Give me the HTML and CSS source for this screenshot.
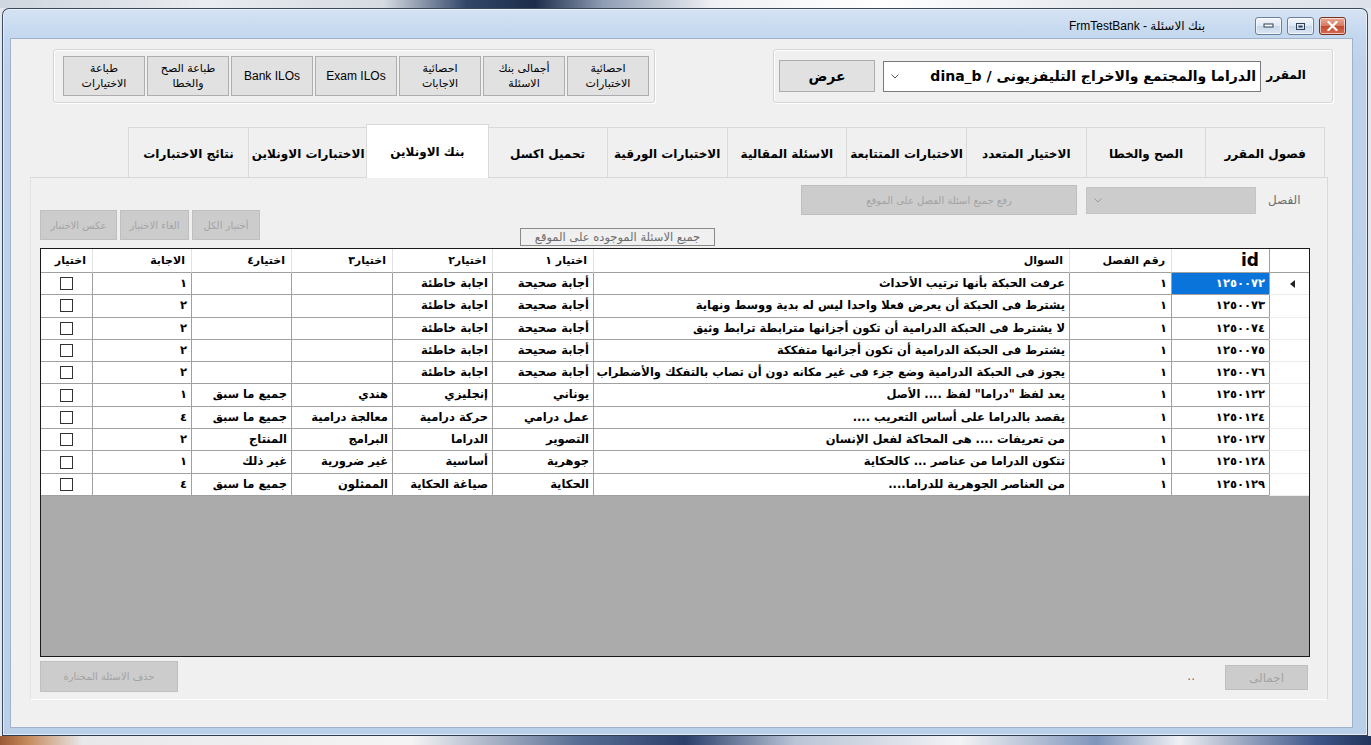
FILE: index.html
```html
<!DOCTYPE html>
<html lang="ar">
<head>
<meta charset="utf-8">
<title>FrmTestBank</title>
<link rel="stylesheet" href="styles.css">
</head>
<body>
<div class="desktop">
  <div class="window">
    <div class="titlebar">
      <span class="title" dir="ltr">FrmTestBank - بنك الاسئلة</span>
      <div class="cbtns">
        <span class="cbtn"><svg width="11" height="6" viewBox="0 0 11 6"><rect x="1" y="1" width="9" height="3" fill="#fff" stroke="#2f3f56" stroke-width="1"/></svg></span>
        <span class="cbtn"><svg width="11" height="9" viewBox="0 0 11 9"><rect x="1.5" y="1.5" width="8" height="6" fill="none" stroke="#2f3f56" stroke-width="1"/><rect x="3.5" y="3.5" width="4" height="2" fill="#2f3f56"/></svg></span>
        <span class="cbtn close"><svg width="11" height="10" viewBox="0 0 11 10"><path d="M1.5 1 L9.5 9 M9.5 1 L1.5 9" stroke="#fff" stroke-width="2.2" stroke-linecap="square"/></svg></span>
      </div>
    </div>
    <div class="client" dir="rtl">
      <div class="top-row">
        <div class="grp grp-course">
          <span class="lbl-course">المقرر</span>
          <div class="combo">
            <span class="combo-text">الدراما والمجتمع والاخراج التليفزيونى / dina_b</span>
            <svg class="combo-arrow" width="8" height="5" viewBox="0 0 8 5"><path d="M0.5 0.5 L4 4 L7.5 0.5" fill="none" stroke="#555" stroke-width="1"/></svg>
          </div>
          <button class="btn btn-show">عرض</button>
        </div>
        <div class="grp grp-tools">
          <button class="btn tbtn">احصائية<br>الاختبارات</button>
          <button class="btn tbtn">أجمالى بنك<br>الاسئلة</button>
          <button class="btn tbtn">احصائية<br>الاجابات</button>
          <button class="btn tbtn latin">Exam ILOs</button>
          <button class="btn tbtn latin">Bank ILOs</button>
          <button class="btn tbtn">طباعة الصح<br>والخطا</button>
          <button class="btn tbtn">طباعة<br>الاختيارات</button>
        </div>
      </div>

      <div class="tabs">
        <div class="tab">فصول المقرر</div>
        <div class="tab">الصح والخطا</div>
        <div class="tab">الاختيار المتعدد</div>
        <div class="tab">الاختبارات المتتابعة</div>
        <div class="tab">الاسئلة المقالية</div>
        <div class="tab">الاختبارات الورقية</div>
        <div class="tab">تحميل اكسل</div>
        <div class="tab active">بنك الاونلاين</div>
        <div class="tab">الاختبارات الاونلاين</div>
        <div class="tab">نتائج الاختبارات</div>
      </div>

      <div class="panel" dir="ltr">
        <div class="toolbar">
          <div class="selbtns">
            <button class="btn dis b-inv">عكس الاختبار</button>
            <button class="btn dis b-clr">الغاء الاختيار</button>
            <button class="btn dis b-all">أختيار الكل</button>
          </div>
          <div class="boxlabel" dir="rtl">جميع الاسئلة الموجوده على الموقع</div>
          <button class="btn dis b-up" dir="rtl">رفع جميع اسئلة الفصل على الموقع</button>
          <div class="combo dis-combo" dir="rtl">
            <span class="combo-text"></span>
            <svg class="combo-arrow" width="8" height="5" viewBox="0 0 8 5"><path d="M0.5 0.5 L4 4 L7.5 0.5" fill="none" stroke="#9a9a9a" stroke-width="1"/></svg>
          </div>
          <span class="lbl-ch" dir="rtl">الفصل</span>
        </div>

        <div class="grid" dir="rtl">
          <div class="row hrow">
            <div class="c rh"></div>
            <div class="c h-id">id</div>
            <div class="c">رقم الفصل</div>
            <div class="c">السوال</div>
            <div class="c">اختيار ١</div>
            <div class="c">اختيار٢</div>
            <div class="c">اختيار٣</div>
            <div class="c">اختيار٤</div>
            <div class="c">الاجابة</div>
            <div class="c">اختيار</div>
          </div>

          <div class="row">
            <div class="c rh"><span class="arrow"></span></div>
            <div class="c sel">١٢٥٠٠٧٢</div>
            <div class="c">١</div>
            <div class="c">عرفت الحبكة بأنها ترتيب الأحداث</div>
            <div class="c">أجابة صحيحة</div>
            <div class="c">اجابة خاطئة</div>
            <div class="c"></div>
            <div class="c"></div>
            <div class="c">١</div>
            <div class="c ck"><span class="chk"></span></div>
          </div>
          <div class="row">
            <div class="c rh"></div>
            <div class="c">١٢٥٠٠٧٣</div>
            <div class="c">١</div>
            <div class="c">يشترط فى الحبكة أن يعرض فعلا واحدا ليس له بدية ووسط ونهاية</div>
            <div class="c">أجابة صحيحة</div>
            <div class="c">اجابة خاطئة</div>
            <div class="c"></div>
            <div class="c"></div>
            <div class="c">٢</div>
            <div class="c ck"><span class="chk"></span></div>
          </div>
          <div class="row">
            <div class="c rh"></div>
            <div class="c">١٢٥٠٠٧٤</div>
            <div class="c">١</div>
            <div class="c">لا يشترط فى الحبكة الدرامية أن تكون أجزانها مترابطة ترابط وثيق</div>
            <div class="c">أجابة صحيحة</div>
            <div class="c">اجابة خاطئة</div>
            <div class="c"></div>
            <div class="c"></div>
            <div class="c">٢</div>
            <div class="c ck"><span class="chk"></span></div>
          </div>
          <div class="row">
            <div class="c rh"></div>
            <div class="c">١٢٥٠٠٧٥</div>
            <div class="c">١</div>
            <div class="c">يشترط فى الحبكة الدرامية أن تكون أجزانها متفككة</div>
            <div class="c">أجابة صحيحة</div>
            <div class="c">اجابة خاطئة</div>
            <div class="c"></div>
            <div class="c"></div>
            <div class="c">٢</div>
            <div class="c ck"><span class="chk"></span></div>
          </div>
          <div class="row">
            <div class="c rh"></div>
            <div class="c">١٢٥٠٠٧٦</div>
            <div class="c">١</div>
            <div class="c">يجوز فى الحبكة الدرامية وضع جزء فى غير مكانه دون أن تصاب بالتفكك والأضطراب</div>
            <div class="c">أجابة صحيحة</div>
            <div class="c">اجابة خاطئة</div>
            <div class="c"></div>
            <div class="c"></div>
            <div class="c">٢</div>
            <div class="c ck"><span class="chk"></span></div>
          </div>
          <div class="row">
            <div class="c rh"></div>
            <div class="c">١٢٥٠١٢٢</div>
            <div class="c">١</div>
            <div class="c">يعد لفظ "دراما" لفظ .... الأصل</div>
            <div class="c">يوناني</div>
            <div class="c">إنجليزي</div>
            <div class="c">هندي</div>
            <div class="c">جميع ما سبق</div>
            <div class="c">١</div>
            <div class="c ck"><span class="chk"></span></div>
          </div>
          <div class="row">
            <div class="c rh"></div>
            <div class="c">١٢٥٠١٢٤</div>
            <div class="c">١</div>
            <div class="c">يقصد بالدراما على أساس التعريب ....</div>
            <div class="c">عمل درامي</div>
            <div class="c">حركة درامية</div>
            <div class="c">معالجة درامية</div>
            <div class="c">جميع ما سبق</div>
            <div class="c">٤</div>
            <div class="c ck"><span class="chk"></span></div>
          </div>
          <div class="row">
            <div class="c rh"></div>
            <div class="c">١٢٥٠١٢٧</div>
            <div class="c">١</div>
            <div class="c">من تعريفات .... هى المحاكة لفعل الإنسان</div>
            <div class="c">التصوير</div>
            <div class="c">الدراما</div>
            <div class="c">البرامج</div>
            <div class="c">المنتاج</div>
            <div class="c">٢</div>
            <div class="c ck"><span class="chk"></span></div>
          </div>
          <div class="row">
            <div class="c rh"></div>
            <div class="c">١٢٥٠١٢٨</div>
            <div class="c">١</div>
            <div class="c">تتكون الدراما من عناصر ... كالحكاية</div>
            <div class="c">جوهرية</div>
            <div class="c">أساسية</div>
            <div class="c">غير ضرورية</div>
            <div class="c">غير ذلك</div>
            <div class="c">١</div>
            <div class="c ck"><span class="chk"></span></div>
          </div>
          <div class="row">
            <div class="c rh"></div>
            <div class="c">١٢٥٠١٢٩</div>
            <div class="c">١</div>
            <div class="c">من العناصر الجوهرية للدراما....</div>
            <div class="c">الحكاية</div>
            <div class="c">صياغة الحكاية</div>
            <div class="c">الممثلون</div>
            <div class="c">جميع ما سبق</div>
            <div class="c">٤</div>
            <div class="c ck"><span class="chk"></span></div>
          </div>
        </div>

        <div class="bottom-row">
          <button class="btn dis b-del" dir="rtl">حذف الاسئلة المختارة</button>
          <span class="dots">..</span>
          <button class="btn dis b-total" dir="rtl">اجمالى</button>
        </div>
      </div>
    </div>
  </div>
</div>
</body>
</html>
```

FILE: styles.css
```css
* { box-sizing: border-box; }
html, body { margin: 0; padding: 0; }
body {
  width: 1371px; height: 745px; overflow: hidden;
  font-family: "DejaVu Sans", "Liberation Sans", sans-serif;
  font-size: 12px; color: #000;
}

.desktop {
  width: 1371px; height: 745px;
  padding: 8px 3px 0 2px;
  background:
    linear-gradient(to right, #cfd6df 0, #e9ecf0 15%, #d6dbe2 28%, #33476a 34%, #1c2c4a 39%, #8f9db4 44%, #eef0f3 52%, #ffffff 64%, #e6e9ee 80%, #dde2ea 100%) top / 100% 8px no-repeat,
    linear-gradient(to right, #9a5a35 0, #c58a5c 2%, #e8e8ea 6%, #f4f4f5 30%, #5a6f95 42%, #2b3f6a 50%, #b9c4d6 58%, #f2f3f5 70%, #7f95bb 80%, #eef0f4 86%, #3d5689 96%, #22355c 100%) bottom / 100% 9px no-repeat,
    #e4e7ec;
}

.window {
  width: 1366px; height: 728px;
  border: 1px solid #3a4a62;
  border-bottom-color: #2f3d52;
  border-radius: 7px 7px 0 0;
  background: linear-gradient(to bottom, #d5e3f3 0, #c3d7ee 28px, #bdd2ea 60px, #bad0e9 100%);
  box-shadow: inset 0 0 0 1px rgba(255,255,255,0.55);
  display: flex; flex-direction: column;
}

.titlebar {
  height: 29px; flex: none;
  display: flex; justify-content: flex-end; align-items: flex-start;
  padding-right: 21px;
}
.title {
  margin-top: 10px; margin-right: 50px;
  font-family: "Liberation Sans", "DejaVu Sans", sans-serif; font-size: 12px; color: #000;
}
.cbtns { display: flex; gap: 5px; margin-top: 8px; }
.cbtn {
  width: 27px; height: 18px;
  border: 1px solid #6a7f9c; border-radius: 3px;
  background: linear-gradient(to bottom, #f4f7fb 0, #dfe8f3 48%, #c9d8ea 52%, #dbe6f2 100%);
  box-shadow: inset 0 0 0 1px rgba(255,255,255,0.6);
  display: flex; align-items: center; justify-content: center;
}
.cbtn.close {
  border-color: #7a3020;
  background: linear-gradient(to bottom, #e9a996 0, #d87a62 48%, #c44a2e 52%, #d56b50 100%);
}

.client {
  flex: none;
  margin: 0 14px 0 7px;
  height: 690px;
  background: #f0f0f0;
  border: 1px solid #9fb2c9;
  display: flex; flex-direction: column;
}

/* top row */
.top-row {
  display: flex; align-items: flex-start;
  margin-top: 10px; height: 54px;
}
.grp {
  height: 54px;
  border: 1px solid #d5d5d5; border-radius: 3px;
  box-shadow: inset 1px 1px 0 #fff, 1px 1px 0 #fff;
  display: flex; align-items: center;
}
.grp-course {
  width: 560px; margin-right: 19px;
  padding-right: 26px; padding-left: 5px;
}
.lbl-course {
  width: 28px; flex: none; white-space: nowrap;
  font-weight: bold; font-size: 12px;
  margin-left: 17px; margin-top: -2px;
  display: flex; justify-content: flex-start;
}
.combo {
  width: 378px; height: 31px; flex: none;
  background: #fff; border: 1px solid #7a7a7a;
  display: flex; align-items: center; justify-content: space-between;
  padding: 0 4px 0 7px; margin-left: 8px;
}
.combo-text {
  font-weight: bold; font-size: 14px; white-space: nowrap; overflow: hidden;
}
.combo-arrow { flex: none; }

.btn {
  font-family: "DejaVu Sans", "Liberation Sans", sans-serif;
  background: #e1e1e1; border: 1px solid #adadad; border-radius: 0;
  color: #000; padding: 0; margin: 0;
  display: flex; align-items: center; justify-content: center; text-align: center;
  white-space: nowrap;
}
.btn-show { width: 96px; height: 32px; font-weight: bold; font-size: 14px; flex: none; }

.grp-tools {
  width: 602px; margin-right: 118px;
  padding-right: 5px; padding-left: 9px;
  gap: 2px;
}
.tbtn { width: 82px; height: 40px; font-size: 11px; line-height: 15px; flex: none; }
.tbtn.latin { font-family: "Liberation Sans", sans-serif; font-size: 12px; }

/* tabs */
.tabs {
  display: flex; align-items: flex-end;
  width: 1298px; height: 53px; margin-top: 21px; margin-right: 24px;
  padding-right: 3px; flex: none;
}
.tab {
  width: 119.7px; height: 50px; flex: none;
  background: #f0f0f0;
  border-top: 1px solid #d9d9d9; border-left: 1px solid #d9d9d9;
  display: flex; align-items: center; justify-content: center;
  font-weight: bold; font-size: 12px; white-space: nowrap;
  padding-top: 3px;
}
.tab:first-child { border-right: 1px solid #d9d9d9; }
.tab.active {
  position: relative; z-index: 2;
  width: 123.7px; margin: 0 -2px -1px -2px; height: 54px;
  background: #fff; border: 1px solid #d9d9d9; border-bottom: none;
  padding-top: 0;
}

/* panel */
.panel {
  width: 1298px; height: 523px; margin-right: 24px; flex: none;
  border: 1px solid #d9d9d9; border-bottom-color: #fff; border-left-color: #e3e3e3;
  background: #f0f0f0;
  display: flex; flex-direction: column; align-items: flex-start;
}
.toolbar {
  height: 70px; flex: none; width: 100%;
  display: flex; align-items: flex-start;
  padding-left: 9px;
}
.selbtns { display: flex; gap: 3px; margin-top: 32px; }
.dis {
  background: #cccccc; border-color: #bfbfbf; color: #a3a3a3;
  font-size: 10px;
}
.b-inv { width: 77px; height: 30px; }
.b-clr { width: 69px; height: 30px; }
.b-all { width: 68px; height: 30px; }
.boxlabel {
  width: 195px; height: 18px; margin-left: 260px; margin-top: 50px;
  border: 1px solid #8a8a8a; color: #6d6d6d;
  font-size: 11.5px; line-height: 16px; text-align: center; white-space: nowrap; overflow: hidden;
}
.b-up { width: 276px; height: 30px; margin-left: 86px; margin-top: 7px; font-size: 10px; }
.dis-combo {
  width: 170px; height: 27px; margin-left: 9px; margin-top: 9px;
  background: #cccccc; border-color: #c4c4c4;
}
.lbl-ch { margin-left: 12px; margin-top: 15px; color: #6d6d6d; font-size: 12px; white-space: nowrap; }

/* grid */
.grid {
  width: 1270px; height: 409px; margin-left: 9px; flex: none;
  border: 1px solid #1a1a1a;
  background: #ababab;
}
.row {
  display: grid;
  grid-template-columns: 40px 98px 102px 476px 101px 100px 101px 100px 99px 51px;
  height: 22.3px;
}
.c {
  display: block; min-width: 0;
  background: #fff;
  border-left: 1px solid #a0a0a0; border-bottom: 1px solid #a0a0a0;
  font-weight: bold; font-size: 11.5px; line-height: 21px;
  white-space: nowrap; overflow: hidden; text-align: right;
  padding-right: 4px;
}
.c:last-child { border-left: none; }
.c.rh { border-bottom-color: #ececec; padding: 0; display: flex; align-items: center; justify-content: center; }
.hrow { height: 24px; }
.hrow .c { border-left-color: #e2e2e2; border-bottom-color: #a0a0a0; font-size: 11px; line-height: 23px; padding-right: 6px; }
.hrow .c.h-id { font-size: 17px; padding-right: 10px; }
.hrow .c.rh { border-left-color: #a0a0a0; border-bottom-color: #a0a0a0; }
.c.sel { background: #0a74da; color: #fff; }
.arrow {
  width: 0; height: 0;
  border-top: 4px solid transparent; border-bottom: 4px solid transparent;
  border-right: 5px solid #222;
  margin-right: -6px;
}
.c.ck { padding: 0; display: flex; align-items: center; justify-content: center; }
.chk { width: 13px; height: 13px; border: 1px solid #333; background: #fff; }

/* bottom */
.bottom-row {
  flex: none; display: flex; align-items: flex-start; width: 100%;
  padding-left: 9px;
}
.b-del { width: 138px; height: 31px; margin-top: 4px; }
.dots { margin-left: auto; margin-top: 12px; color: #6d6d6d; font-size: 12px; }
.b-total { width: 83px; height: 25px; margin-top: 8px; margin-left: 30px; margin-right: 19px; font-size: 12px; }
```
